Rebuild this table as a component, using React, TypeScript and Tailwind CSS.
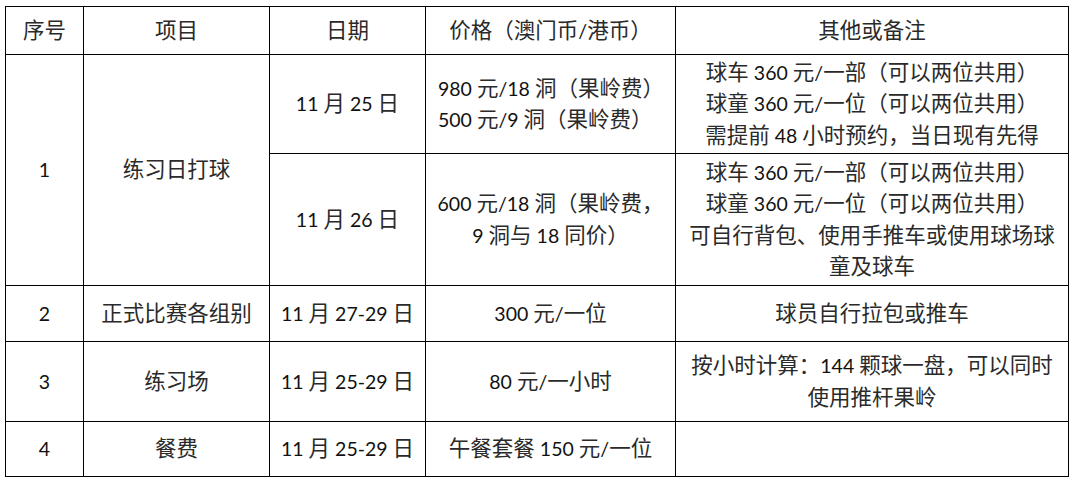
import React from 'react';

const font = { fontFamily: 'Lato, "Noto Sans CJK SC", sans-serif' };

const cell = 'border border-black text-center align-middle p-0';

// Latin runs (digits, slashes, spaces) are set a bit smaller, like Calibri next to the CJK face
function T({ children }: { children: string }) {
  const parts = children.split(/([\u0000-\u00ff]+)/).filter(Boolean);
  return (
    <>
      {parts.map((p, i) =>
        /^[\u0000-\u00ff]+$/.test(p) ? (
          <span key={i} className="text-[19.5px] text-[#111]">
            {p}
          </span>
        ) : (
          <span key={i}>{p}</span>
        )
      )}
    </>
  );
}

function Lines({ lines }: { lines: string[] }) {
  return (
    <>
      {lines.map((l, i) => (
        <div key={i}>
          <T>{l}</T>
        </div>
      ))}
    </>
  );
}

export default function App() {
  return (
    <div
      className="min-h-[486px] bg-white pl-[5px] pt-[6px] text-[21.5px] leading-[31.5px] text-[#2a2a2a]"
      style={font}
    >
      <table className="w-[1063px] table-fixed border-collapse">
        <colgroup>
          <col className="w-[78px]" />
          <col className="w-[186px]" />
          <col className="w-[156px]" />
          <col className="w-[250px]" />
          <col className="w-[393px]" />
        </colgroup>
        <tbody>
          <tr className="h-[48px]">
            <td className={cell}>序号</td>
            <td className={cell}>项目</td>
            <td className={cell}>日期</td>
            <td className={cell}>
              <T>价格（澳门币/港币）</T>
            </td>
            <td className={cell}>其他或备注</td>
          </tr>
          <tr className="h-[99px]">
            <td className={cell} rowSpan={2}>
              <T>1</T>
            </td>
            <td className={cell} rowSpan={2}>
              练习日打球
            </td>
            <td className={cell}>
              <T>11 月 25 日</T>
            </td>
            <td className={`${cell} !text-left pl-[12px]`}>
              <Lines lines={['980 元/18 洞（果岭费）', '500 元/9 洞（果岭费）']} />
            </td>
            <td className={cell}>
              <Lines
                lines={[
                  '球车 360 元/一部（可以两位共用）',
                  '球童 360 元/一位（可以两位共用）',
                  '需提前 48 小时预约，当日现有先得',
                ]}
              />
            </td>
          </tr>
          <tr className="h-[132px]">
            <td className={cell}>
              <T>11 月 26 日</T>
            </td>
            <td className={cell}>
              <Lines lines={['600 元/18 洞（果岭费，', '9 洞与 18 同价）']} />
            </td>
            <td className={cell}>
              <Lines
                lines={[
                  '球车 360 元/一部（可以两位共用）',
                  '球童 360 元/一位（可以两位共用）',
                  '可自行背包、使用手推车或使用球场球',
                  '童及球车',
                ]}
              />
            </td>
          </tr>
          <tr className="h-[56px]">
            <td className={cell}>
              <T>2</T>
            </td>
            <td className={cell}>正式比赛各组别</td>
            <td className={cell}>
              <T>11 月 27-29 日</T>
            </td>
            <td className={cell}>
              <T>300 元/一位</T>
            </td>
            <td className={cell}>球员自行拉包或推车</td>
          </tr>
          <tr className="h-[80px]">
            <td className={cell}>
              <T>3</T>
            </td>
            <td className={cell}>练习场</td>
            <td className={cell}>
              <T>11 月 25-29 日</T>
            </td>
            <td className={cell}>
              <T>80 元/一小时</T>
            </td>
            <td className={cell}>
              <Lines lines={['按小时计算：144 颗球一盘，可以同时', '使用推杆果岭']} />
            </td>
          </tr>
          <tr className="h-[55px]">
            <td className={cell}>
              <T>4</T>
            </td>
            <td className={cell}>餐费</td>
            <td className={cell}>
              <T>11 月 25-29 日</T>
            </td>
            <td className={cell}>
              <T>午餐套餐 150 元/一位</T>
            </td>
            <td className={cell}></td>
          </tr>
        </tbody>
      </table>
    </div>
  );
}
